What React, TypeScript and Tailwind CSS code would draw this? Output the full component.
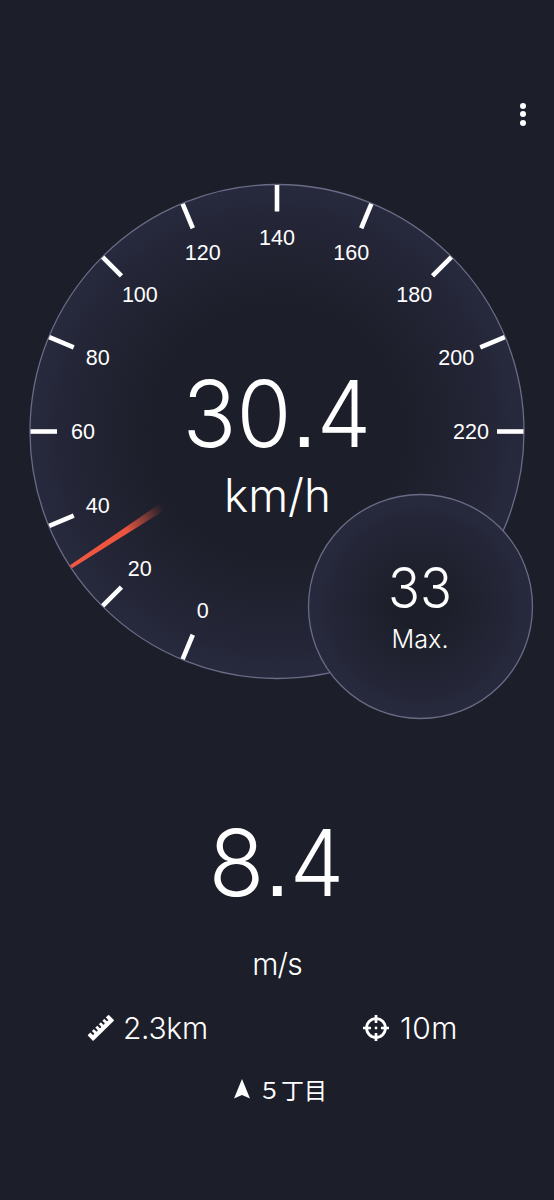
const CX = 277;
const CY = 431.5;
const RADIUS = 247;
const STEP_ANGLE = 22.5;

const speed = 30.4;
const marks = [0, 20, 40, 60, 80, 100, 120, 140, 160, 180, 200, 220];

// 140 sits at the top of the dial, every 20 km/h is one step
const angleOf = (value: number) => ((value - 140) / 20) * STEP_ANGLE;

const pointAt = (value: number, radius: number) => {
  const rad = (angleOf(value) * Math.PI) / 180;
  return { x: CX + radius * Math.sin(rad), y: CY - radius * Math.cos(rad) };
};

function Gauge() {
  return (
    <svg viewBox="28 182 508 540" className="block w-[508px] h-[540px]">
      <defs>
        <radialGradient id="dial">
          <stop offset="0.5" stopColor="#1c1e29" />
          <stop offset="1" stopColor="#27293d" />
        </radialGradient>
        <radialGradient id="maxDial">
          <stop offset="0.2" stopColor="#1c1e29" />
          <stop offset="0.9" stopColor="#26283b" />
          <stop offset="1" stopColor="#27293d" />
        </radialGradient>
        <linearGradient id="needle" x1="0" y1="0" x2="0" y2="1">
          <stop offset="0" stopColor="#f4573f" />
          <stop offset="0.6" stopColor="#ea553f" />
          <stop offset="1" stopColor="#ea553f" stopOpacity="0" />
        </linearGradient>
      </defs>

      <circle cx={CX} cy={CY} r={RADIUS} fill="url(#dial)" stroke="#6b6b86" strokeWidth="1.3" />

      {marks.map(mark => {
        const label = pointAt(mark, 194);
        return (
          <g key={mark}>
            <path
              d={`M${CX} ${CY - 246.5}V${CY - 220}`}
              stroke="#fff"
              strokeWidth="4.6"
              transform={`rotate(${angleOf(mark)} ${CX} ${CY})`}
            />
            <text
              x={label.x}
              y={label.y + 7.5}
              textAnchor="middle"
              className="fill-white font-['Liberation_Sans',sans-serif] text-[21.5px]"
            >
              {mark}
            </text>
          </g>
        );
      })}

      <path
        d={`M${CX - 1.8} ${CY - 246.5}h3.6L${CX + 4} ${CY - 137}h-8z`}
        fill="url(#needle)"
        transform={`rotate(${angleOf(speed)} ${CX} ${CY})`}
      />

      <g className="fill-white font-['Inter',sans-serif] font-light">
        <text y="447" className="text-[92px]">
          <tspan x="182.5" textLength="109" lengthAdjust="spacingAndGlyphs">30</tspan>
          <tspan x="291.5" className="font-['Liberation_Sans',sans-serif]">.</tspan>
          <tspan x="317" textLength="54" lengthAdjust="spacingAndGlyphs">4</tspan>
        </text>
        <text x="224" y="512" textLength="107" lengthAdjust="spacingAndGlyphs" className="text-[46px]">km/h</text>
      </g>

      <circle cx="420.5" cy="606.5" r="112" fill="url(#maxDial)" stroke="#6b6b86" strokeWidth="1.3" />
      <g className="fill-white font-['Inter',sans-serif] font-light">
        <text x="388" y="607.5" textLength="64" lengthAdjust="spacingAndGlyphs" className="text-[56px]">33</text>
        <text x="391.5" y="648" textLength="57" lengthAdjust="spacingAndGlyphs" className="text-[25.5px]">Max.</text>
      </g>
    </svg>
  );
}

function RulerIcon() {
  return (
    <svg viewBox="0 0 28 28" className="w-7 h-7">
      <g transform="translate(0.5 21.3) rotate(-44.3)">
        <rect width="29.5" height="8" rx="0.8" fill="#fff" />
        <path d="M5 -1V2.8M9.9 -1V2.8M14.8 -1V2.8M19.7 -1V2.8M24.6 -1V2.8" stroke="#1c1e29" strokeWidth="2.1" strokeLinecap="round" />
      </g>
    </svg>
  );
}

function TargetIcon() {
  return (
    <svg viewBox="0 0 26 26" className="w-[26px] h-[26px]" fill="none" stroke="#fff">
      <circle cx="13" cy="13" r="9.4" strokeWidth="2.8" />
      <path d="M13 0v8M13 18v8M0 13h8M18 13h8" strokeWidth="2.7" />
      <circle cx="13" cy="13" r="1.4" fill="#fff" stroke="none" />
    </svg>
  );
}

export default function App() {
  return (
    <div className="w-[554px] h-[1200px] bg-[#1c1e29] text-white font-['Inter',sans-serif] font-light overflow-hidden flex flex-col">
      <header className="flex justify-end pt-[102.5px] pr-[28.5px] h-[182px]">
        <button aria-label="Menu" className="flex flex-col gap-[2.5px] w-[6px] h-6">
          <span className="w-[6px] h-[6px] shrink-0 rounded-full bg-white" />
          <span className="w-[6px] h-[6px] shrink-0 rounded-full bg-white" />
          <span className="w-[6px] h-[6px] shrink-0 rounded-full bg-white" />
        </button>
      </header>

      <main className="pl-7">
        <Gauge />
      </main>

      <section className="flex flex-col items-center">
        <svg viewBox="0 0 180 130" className="block w-[180px] h-[130px] mt-[72px] fill-white">
          <text y="102" className="text-[92px]">
            <tspan x="21.5" textLength="56" lengthAdjust="spacingAndGlyphs">8</tspan>
            <tspan x="77.5" className="font-['Liberation_Sans',sans-serif]">.</tspan>
            <tspan x="103" textLength="54" lengthAdjust="spacingAndGlyphs">4</tspan>
          </text>
        </svg>
        <p className="mt-[21px] text-[30px] leading-[38px] tracking-[-0.8px]">m/s</p>
      </section>

      <section className="flex mt-[26px] h-[38px]">
        <div className="flex items-center pl-[87px] w-[363px]">
          <RulerIcon />
          <span className="ml-[8px] text-[30px] leading-[38px] tracking-[-0.3px]">2.3km</span>
        </div>
        <div className="flex items-center">
          <TargetIcon />
          <span className="ml-[11px] text-[30px] leading-[38px] tracking-[0.4px]">10m</span>
        </div>
      </section>

      <footer className="flex items-center pl-[234px] mt-[23px] h-[38px]">
        <svg viewBox="0 0 16 20" className="w-4 h-5 fill-white">
          <path d="M8 0l8 19.5-8-3.6-8 3.6z" />
        </svg>
        <span className="ml-2 text-[23px] leading-[38px] font-['Noto_Sans_CJK_JP',sans-serif] font-normal">５丁目</span>
      </footer>
    </div>
  );
}
